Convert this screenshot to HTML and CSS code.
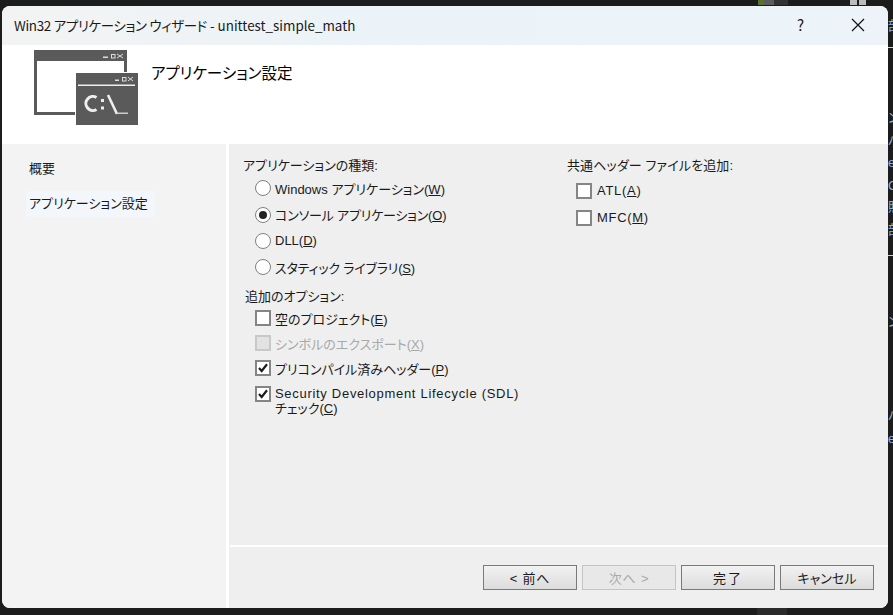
FILE: index.html
```html
<!DOCTYPE html>
<html lang="ja">
<head>
<meta charset="utf-8">
<title>Win32 アプリケーション ウィザード</title>
<link rel="stylesheet" href="styles.css">
</head>
<body>
<div class="backdrop">
  <span class="frag f1">部</span><span class="frag f2">ン</span><span class="frag f3">ハ</span><span class="frag f4">ea</span><span class="frag f5">C</span><span class="frag f6">照</span><span class="frag f7">部</span><span class="frag f8">ン</span><span class="frag f9">ハ</span><span class="frag f10">ea</span>
  <i class="rule r1"></i><i class="rule r2"></i>
  <i class="tile t1"></i><i class="tile t2"></i><i class="tile t3"></i><i class="tile t4"></i><i class="tile t5"></i><i class="tile t6"></i>
</div>
<div class="dialog">
  <header class="titlebar">
    <span class="title"><span class="title-jp">Win32 アプリケーション ウィザード</span> - unittest_simple_math</span>
    <span class="help">?</span>
    <svg class="close" width="14" height="14" viewBox="0 0 14 14"><path d="M1 1L13 13M13 1L1 13" stroke="#111" stroke-width="1.2" fill="none"/></svg>
  </header>
  <section class="banner">
    <svg class="logo" width="104" height="76" viewBox="0 0 104 76">
      <rect x="0" y="0" width="93" height="65" fill="#5a5a5a"/>
      <rect x="3" y="11" width="87" height="51" fill="#fff"/>
      <rect x="41" y="22" width="63" height="54" fill="#fff"/>
      <rect x="42" y="23" width="62" height="52" fill="#5a5a5a"/>
      <rect x="69" y="6.5" width="5" height="1.5" fill="#ddd"/><rect x="77.5" y="4.5" width="3.5" height="3.5" fill="none" stroke="#ddd"/><path d="M83 4l6 4M89 4l-6 4" stroke="#ddd" fill="none"/>
      <rect x="81" y="29.5" width="4" height="1.5" fill="#ddd"/><rect x="88.5" y="27.5" width="3.5" height="3.5" fill="none" stroke="#ddd"/><path d="M94 27l5 4M99 27l-5 4" stroke="#ddd" fill="none"/>
      <rect x="44" y="34.5" width="57" height="1.5" fill="#eee"/>
      <path d="M62.5 47.5a7 7 0 1 0 0 12" stroke="#eee" stroke-width="3" fill="none"/>
      <rect x="67" y="49" width="3" height="3" fill="#eee"/><rect x="67" y="56.5" width="3" height="3" fill="#eee"/>
      <path d="M74 45L83 64" stroke="#eee" stroke-width="2.6" fill="none"/>
      <rect x="84" y="62.5" width="10" height="1.5" fill="#ccc"/>
    </svg>
    <h1 class="heading">アプリケーション設定</h1>
  </section>
  <div class="body">
    <nav class="side">
      <div class="side-item">概要</div>
      <div class="side-item current">アプリケーション設定</div>
    </nav>
    <main class="panel">
      <div class="content">
        <div class="col-left">
          <div class="group-label">アプリケーションの種類:</div>
          <label class="row radio-row"><span class="radio"></span><span>Windows アプリケーション(<u>W</u>)</span></label>
          <label class="row radio-row"><span class="radio on"></span><span class="tight">コンソール アプリケーション(<u>O</u>)</span></label>
          <label class="row radio-row"><span class="radio"></span><span>DLL(<u>D</u>)</span></label>
          <label class="row radio-row"><span class="radio"></span><span class="tight">スタティック ライブラリ(<u>S</u>)</span></label>
          <div class="group-label second">追加のオプション:</div>
          <label class="row check-row"><span class="check"></span><span>空のプロジェクト(<u>E</u>)</span></label>
          <label class="row check-row disabled"><span class="check"></span><span>シンボルのエクスポート(<u>X</u>)</span></label>
          <label class="row check-row"><span class="check"><svg width="12" height="12" viewBox="0 0 12 12"><path d="M2 6L4.7 9L10 2.3" stroke="#1c1c1c" stroke-width="2.2" fill="none"/></svg></span><span>プリコンパイル済みヘッダー(<u>P</u>)</span></label>
          <label class="row check-row multi"><span class="check"><svg width="12" height="12" viewBox="0 0 12 12"><path d="M2 6L4.7 9L10 2.3" stroke="#1c1c1c" stroke-width="2.2" fill="none"/></svg></span><span><span class="spaced">Security Development Lifecycle (SDL)</span><br>チェック(<u>C</u>)</span></label>
        </div>
        <div class="col-right">
          <div class="group-label">共通ヘッダー ファイルを追加:</div>
          <label class="row check-row"><span class="check"></span><span class="spaced">ATL(<u>A</u>)</span></label>
          <label class="row check-row"><span class="check"></span><span class="spaced">MFC(<u>M</u>)</span></label>
        </div>
      </div>
      <footer class="footer">
        <button class="btn arrow">&lt; 前へ</button>
        <button class="btn off arrow">次へ &gt;</button>
        <button class="btn wide">完了</button>
        <button class="btn">キャンセル</button>
      </footer>
    </main>
  </div>
</div>
</body>
</html>
```
FILE: styles.css
```css
html, body { margin: 0; height: 100%; }
body {
  width: 893px; height: 615px; overflow: hidden; background: #1c1c1c; position: relative;
  font-family: "Liberation Sans", "Noto Sans CJK JP", sans-serif;
  font-feature-settings: "palt";
  font-size: 13px; color: #1a1a1a;
  padding: 6px 5px 7px 2px; box-sizing: border-box;
}
.backdrop { position: absolute; inset: 0; }
.frag { position: absolute; left: 888px; color: #8fb4d4; font-size: 13px; line-height: 16px; }
.f1 { top: 18px; } .f2 { top: 110px; } .f3 { top: 133px; } .f4 { top: 155px; } .f5 { top: 178px; }
.f6 { top: 199px; } .f7 { top: 222px; } .f8 { top: 314px; } .f9 { top: 408px; } .f10 { top: 431px; }
.rule { position: absolute; left: 888px; width: 5px; height: 1px; background: #cfcfcf; }
.r1 { top: 47px; } .r2 { top: 255px; }
.tile { position: absolute; top: 0; height: 5px; }
.t1 { left: 758px; width: 6px; background: #5d7030; }
.t2 { left: 764px; width: 10px; background: #5c5c5c; }
.t3 { left: 774px; width: 14px; background: #333; }
.t4 { left: 850px; width: 7px; background: #bbb; }
.t5 { left: 859px; width: 7px; background: #bbb; }
.t6 { left: 757px; top: 608px; width: 30px; height: 7px; background: #2a2a2a; }
.dialog { position: relative; height: 602px; border-radius: 8px; overflow: hidden; display: flex; flex-direction: column; background: #fff; }
.titlebar { height: 39px; flex: none; background: linear-gradient(90deg, #f3f3f3, #ebf3f9 45%, #edf3f9); display: flex; align-items: center; padding: 0 23px 2px 12px; box-sizing: border-box; font-size: 13.4px; font-family: "Noto Sans CJK JP", sans-serif; }
.title { flex: 1; }
.title-jp { letter-spacing: -.3px; }
.help { margin-right: 47px; font-size: 15px; }
.banner { height: 99px; flex: none; display: flex; align-items: flex-start; padding-left: 32px; }
.logo { margin-top: 5px; flex: none; }
.heading { margin: 16px 0 0 13px; font-size: 15.5px; font-weight: 400; color: #000; }
.body { flex: 1; display: flex; min-height: 0; }
.side { width: 224px; flex: none; background: #f3f3f3; border-right: 3px solid #fff; padding-top: 13px; box-sizing: content-box; }
.side-item { height: 24px; line-height: 24px; padding-left: 27px; }
.side-item.current { display: block; width: 126px; height: 26px; line-height: 26px; margin: 10px 0 0 24px; padding-left: 3px; background: #f3f6fb; }
.panel { flex: 1; background: #efefef; display: flex; flex-direction: column; }
.content { flex: 1; display: flex; padding: 13px 0 0 14px; }
.col-left { width: 324px; }
.group-label { line-height: 17px; height: 18px; }
.group-label.second { margin: 7px 0 0 2px; }
.col-right .group-label { letter-spacing: .12px; height: 20px; }
.row { display: flex; align-items: center; height: 26.4px; }
.radio-row { padding-left: 12px; gap: 4px; }
.radio { width: 16px; height: 16px; box-sizing: border-box; border: 1.5px solid #808080; border-radius: 50%; background: #fff; display: grid; place-items: center; }
.radio.on::after { content: ""; width: 8px; height: 8px; border-radius: 50%; background: #222; }
.check-row { padding-left: 12px; gap: 4px; height: 25px; }
.check { width: 16px; height: 16px; box-sizing: border-box; border: 2px solid #858585; background: #fff; flex: none; display: grid; place-items: center; }
.disabled { color: #a8a8a8; }
.disabled .check { background: #e2e2e2; border-color: #c8c8c8; }
.multi { align-items: flex-start; line-height: 15px; height: auto; padding-top: 5px; }
.spaced { letter-spacing: .7px; }
.tight { letter-spacing: -.2px; }
.col-right .check-row { padding-left: 9px; gap: 5px; height: 27px; }
.footer { height: 63px; flex: none; border-top: 2px solid #fff; margin-left: 1px; display: flex; justify-content: flex-end; gap: 5px; padding: 18px 14px 0 0; box-sizing: border-box; }
.btn { width: 94px; height: 25px; border: 1px solid #7a7a7a; background: linear-gradient(#f2f2f2, #dcdcdc); font: inherit; font-feature-settings: "palt"; color: #1a1a1a; padding: 0; }
.btn.arrow { letter-spacing: .8px; }
.btn.wide { letter-spacing: 2px; }
.btn.off { color: #a8a8a8; border-color: #c4c4c4; background: #e8e8e8; }
```
